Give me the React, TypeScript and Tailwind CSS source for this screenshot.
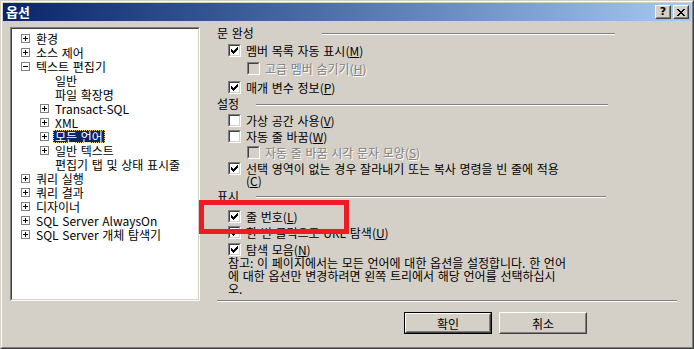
import React from "react";

function Check() {
  const cols: [number, number][] = [
    [3, 5],
    [4, 6],
    [5, 7],
    [6, 6],
    [7, 5],
    [8, 4],
    [9, 3],
  ];
  return (
    <svg className="absolute left-[-2px] top-[-2px]" width="13" height="13" shapeRendering="crispEdges">
      {cols.map(([x, y]) => (
        <rect key={x} x={x} y={y} width="1" height="3" fill="#000" />
      ))}
    </svg>
  );
}

function CheckBox({ checked, disabled }: { checked?: boolean; disabled?: boolean }) {
  return (
    <div className="w-[13px] h-[13px] shrink-0 border border-t-[#808080] border-l-[#808080] border-b-white border-r-white">
      <div
        className={
          "relative w-[11px] h-[11px] border border-t-[#404040] border-l-[#404040] border-b-[#d4d0c8] border-r-[#d4d0c8] " +
          (disabled ? "bg-[#d4d0c8]" : "bg-white")
        }
      >
        {checked && <Check />}
      </div>
    </div>
  );
}

function U({ c }: { c: string }) {
  return (
    <>
      (<span className="underline underline-offset-[1px]">{c}</span>)
    </>
  );
}

function CbRow({
  checked,
  disabled,
  indent,
  mt,
  children,
}: {
  checked?: boolean;
  disabled?: boolean;
  indent?: boolean;
  mt: string;
  children: React.ReactNode;
}) {
  return (
    <div className={"flex items-start " + mt + (indent ? " pl-[30px]" : " pl-[11px]")}>
      <CheckBox checked={checked} disabled={disabled} />
      <div
        className={
          "ml-[5px] leading-[13px] " +
          (disabled ? "text-[#808080] [text-shadow:1px_1px_0_#fff]" : "text-black")
        }
      >
        {children}
      </div>
    </div>
  );
}

function GroupLabel({ text, labelW, lineW, mt }: { text: string; labelW: string; lineW: string; mt: string }) {
  return (
    <div className={"flex items-start h-[13px] " + mt}>
      <div className={"leading-[13px] shrink-0 " + labelW}>{text}</div>
      <div className={"mt-[7px] h-[2px] border-t border-t-[#808080] border-b border-b-white " + lineW} />
    </div>
  );
}

function PlusBox({ minus }: { minus?: boolean }) {
  return (
    <div className="w-[9px] h-[9px] shrink-0 border border-[#808080] bg-white relative">
      <svg className="absolute left-0 top-0" width="7" height="7" shapeRendering="crispEdges">
        <rect x="1" y="3" width="5" height="1" fill="#000" />
        {!minus && <rect x="3" y="1" width="1" height="5" fill="#000" />}
      </svg>
    </div>
  );
}

type Item = { t: string; lvl: 1 | 2; box?: "plus" | "minus"; sel?: boolean };

const items: Item[] = [
  { t: "환경", lvl: 1, box: "plus" },
  { t: "소스 제어", lvl: 1, box: "plus" },
  { t: "텍스트 편집기", lvl: 1, box: "minus" },
  { t: "일반", lvl: 2 },
  { t: "파일 확장명", lvl: 2 },
  { t: "Transact-SQL", lvl: 2, box: "plus" },
  { t: "XML", lvl: 2, box: "plus" },
  { t: "모든 언어", lvl: 2, box: "plus", sel: true },
  { t: "일반 텍스트", lvl: 2, box: "plus" },
  { t: "편집기 탭 및 상태 표시줄", lvl: 2 },
  { t: "쿼리 실행", lvl: 1, box: "plus" },
  { t: "쿼리 결과", lvl: 1, box: "plus" },
  { t: "디자이너", lvl: 1, box: "plus" },
  { t: "SQL Server AlwaysOn", lvl: 1, box: "plus" },
  { t: "SQL Server 개체 탐색기", lvl: 1, box: "plus" },
];

function TreeRow({ it }: { it: Item }) {
  const boxMl = it.lvl === 1 ? "ml-[9px]" : "ml-[28px]";
  return (
    <div className="h-[14px] flex items-center">
      {it.box ? (
        <div className={"flex items-center " + boxMl}>
          <PlusBox minus={it.box === "minus"} />
        </div>
      ) : (
        <div className="w-[37px] shrink-0" />
      )}
      {it.sel ? (
        <div className="ml-[4px] h-[13px] px-px leading-[11px] bg-[#0a246a] text-white border border-dotted border-[#e8d48a]">
          {it.t}
        </div>
      ) : (
        <div className="leading-[13px] whitespace-nowrap ml-[6px]">{it.t}</div>
      )}
    </div>
  );
}

function TitleBtn({ children }: { children: React.ReactNode }) {
  return (
    <div className="w-[16px] h-[14px] border border-t-white border-l-white border-b-[#404040] border-r-[#404040]">
      <div className="w-[14px] h-[12px] bg-[#d4d0c8] border border-t-[#d4d0c8] border-l-[#d4d0c8] border-b-[#808080] border-r-[#808080] flex items-center justify-center">
        {children}
      </div>
    </div>
  );
}

function CloseGlyph() {
  const px: [number, number, number][] = [
    [0, 0, 2],
    [6, 0, 2],
    [1, 1, 2],
    [5, 1, 2],
    [2, 2, 4],
    [3, 3, 2],
    [2, 4, 4],
    [1, 5, 2],
    [5, 5, 2],
    [0, 6, 2],
    [6, 6, 2],
  ];
  return (
    <svg width="8" height="7" shapeRendering="crispEdges">
      {px.map(([x, y, w], i) => (
        <rect key={i} x={x} y={y} width={w} height="1" fill="#000" />
      ))}
    </svg>
  );
}

function Button({ children, def }: { children: React.ReactNode; def?: boolean }) {
  if (def) {
    return (
      <div className="w-[88px] h-[22px] border border-black">
        <div className="w-full h-full border border-t-white border-l-white border-b-[#404040] border-r-[#404040]">
          <div className="w-full h-full border border-t-[#d4d0c8] border-l-[#d4d0c8] border-b-[#808080] border-r-[#808080] flex items-center justify-center leading-[13px]">
            {children}
          </div>
        </div>
      </div>
    );
  }
  return (
    <div className="w-[88px] h-[22px] border border-t-white border-l-white border-b-[#404040] border-r-[#404040]">
      <div className="w-full h-full border border-t-[#d4d0c8] border-l-[#d4d0c8] border-b-[#808080] border-r-[#808080] flex items-center justify-center leading-[13px]">
        {children}
      </div>
    </div>
  );
}

export default function App() {
  return (
    <div className="w-[694px] h-[349px] overflow-hidden font-['Noto_Sans_CJK_KR',sans-serif] text-[12px] text-black [word-spacing:1px]">
      <div className="relative w-full h-full border border-t-[#d4d0c8] border-l-[#d4d0c8] border-b-[#404040] border-r-[#404040] bg-[#d4d0c8]">
        <div className="w-full h-full border border-t-white border-l-white border-b-[#808080] border-r-[#808080] p-px flex flex-col">
          {/* Title bar */}
          <div className="h-[18px] shrink-0 bg-linear-to-r from-[#0a246a] to-[#a6caf0] flex items-center pl-[3px] pr-[2px]">
            <div className="text-white font-bold text-[13px] leading-[14px]">옵션</div>
            <div className="ml-auto flex items-center gap-[2px]">
              <TitleBtn>
                <span className="font-['DejaVu_Sans',sans-serif] font-bold text-[11px] leading-[10px]">?</span>
              </TitleBtn>
              <TitleBtn>
                <CloseGlyph />
              </TitleBtn>
            </div>
          </div>

          {/* Body */}
          <div className="flex items-start">
            {/* Tree */}
            <div className="ml-[7px] mt-[6px] w-[190px] h-[274px] shrink-0 border border-t-[#808080] border-l-[#808080] border-b-white border-r-white">
              <div className="w-full h-full bg-white border border-t-[#404040] border-l-[#404040] border-b-[#d4d0c8] border-r-[#d4d0c8] pt-[2px] overflow-hidden">
                {items.map((it) => (
                  <TreeRow key={it.t} it={it} />
                ))}
              </div>
            </div>

            {/* Right panel */}
            <div className="ml-[17px] flex flex-col">
              <GroupLabel text="문 완성" labelW="w-[105px]" lineW="w-[293px]" mt="mt-[5px]" />
              <CbRow checked mt="mt-[5px]">
                멤버 목록 자동 표시<U c="M" />
              </CbRow>
              <CbRow disabled indent mt="mt-[5px]">
                고급 멤버 숨기기<U c="H" />
              </CbRow>
              <CbRow checked mt="mt-[6px]">
                매개 변수 정보<U c="P" />
              </CbRow>
              <GroupLabel text="설정" labelW="w-[39px]" lineW="w-[352px]" mt="mt-[3px]" />
              <CbRow mt="mt-[4px]">
                가상 공간 사용<U c="V" />
              </CbRow>
              <CbRow mt="mt-[3px]">
                자동 줄 바꿈<U c="W" />
              </CbRow>
              <CbRow disabled indent mt="mt-[3px]">
                자동 줄 바꿈 시각 문자 모양<U c="S" />
              </CbRow>
              <CbRow checked mt="mt-[3px]">
                <div>선택 영역이 없는 경우 잘라내기 또는 복사 명령을 빈 줄에 적용</div>
                <div className="leading-[11px]">
                  <U c="C" />
                </div>
              </CbRow>
              <GroupLabel text="표시" labelW="w-[39px]" lineW="w-[350px]" mt="mt-[3px]" />
              <CbRow checked mt="mt-[8px]">
                줄 번호<U c="L" />
              </CbRow>
              <CbRow checked mt="mt-[3px]">
                한 번 클릭으로 URL 탐색<U c="U" />
              </CbRow>
              <CbRow checked mt="mt-[4px]">
                탐색 모음<U c="N" />
              </CbRow>
              <div className="pl-[11px] leading-[13px]">
                <div>참고: 이 페이지에서는 모든 언어에 대한 옵션을 설정합니다. 한 언어</div>
                <div>에 대한 옵션만 변경하려면 왼쪽 트리에서 해당 언어를 선택하십시</div>
                <div>오.</div>
              </div>
              <div className="mt-[5px] w-[460px] h-[2px] border-t border-t-[#808080] border-b border-b-white" />
              <div className="mt-[10px] flex gap-[7px] pl-[187px]">
                <Button def>확인</Button>
                <Button>취소</Button>
              </div>
            </div>
          </div>

          {/* Red highlight overlay */}
          <div className="absolute left-[198px] top-[199px] w-[150px] h-[34px] border-[5px] border-[#ed1c24]" />
        </div>
      </div>
    </div>
  );
}
